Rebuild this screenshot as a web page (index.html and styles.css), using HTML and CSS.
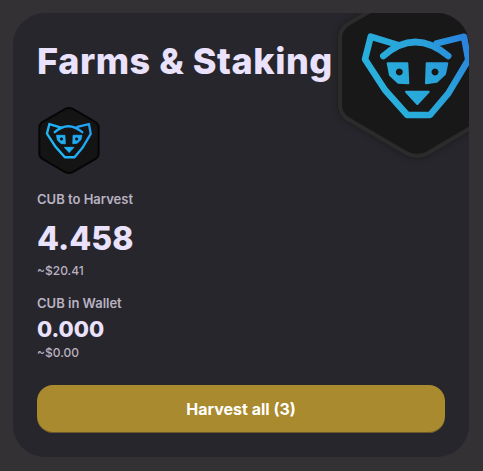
FILE: index.html
```html
<!DOCTYPE html>
<html lang="en">
<head>
<meta charset="utf-8">
<title>Farms &amp; Staking</title>
<link rel="stylesheet" href="styles.css">
</head>
<body>
<svg class="defs" width="0" height="0" aria-hidden="true">
  <defs>
    <linearGradient id="faceBig" gradientUnits="userSpaceOnUse" x1="25" y1="110" x2="130" y2="45">
      <stop offset="0" stop-color="#28b4dc"/>
      <stop offset="0.6" stop-color="#29a2da"/>
      <stop offset="1" stop-color="#2a7ede"/>
    </linearGradient>
    <linearGradient id="faceSmall" gradientUnits="userSpaceOnUse" x1="25" y1="110" x2="130" y2="45">
      <stop offset="0" stop-color="#20bdf5"/>
      <stop offset="1" stop-color="#229cf5"/>
    </linearGradient>
    <g id="face">
      <path class="line" d="M30.7 48.7 25 71.3 45 102 67.3 127H90L108.3 105.3 128.3 72 124 48.7 96.7 55.3M30.7 48.7 58.3 57"/>
      <path class="line" d="M43.3 68Q75 40 108.3 68"/>
      <path class="fill" fill-rule="evenodd" d="M47.7 75.3H67.3L68.3 95.3 58.3 94.7 50 87ZM59.3 79.5a4.5 4.5 0 1 0 .01 0Z"/>
      <path class="fill" fill-rule="evenodd" d="M107.3 75.3H86.7L86 95.3 96.7 93.7 105 86ZM95 79.5a4.5 4.5 0 1 0 .01 0Z"/>
      <path class="fill" d="M66 103.7H88.7L77.3 116Z"/>
    </g>
  </defs>
</svg>
<main class="card">
  <svg class="mascot" viewBox="-6 -6 166 179" aria-hidden="true">
    <path class="hex-big" d="M66 2Q77-4 88 2L146 36Q154 41 154 50V117Q154 126 146 131L88 165Q77 171 66 165L8 131Q0 126 0 117V50Q0 41 8 36Z"/>
    <use href="#face" class="face-big"/>
  </svg>
  <h1 class="title">Farms &amp; Staking</h1>
  <svg class="token" viewBox="-6 -6 166 179" aria-hidden="true">
    <path class="hex-small" d="M66 2Q77-4 88 2L146 36Q154 41 154 50V117Q154 126 146 131L88 165Q77 171 66 165L8 131Q0 126 0 117V50Q0 41 8 36Z"/>
    <use href="#face" class="face-small" transform="translate(-7.7 -12.8) scale(1.1)"/>
  </svg>
  <section class="stat">
    <div class="label">CUB to Harvest</div>
    <div class="value value-lg">4.458</div>
    <div class="usd">~$20.41</div>
  </section>
  <section class="stat stat-wallet">
    <div class="label">CUB in Wallet</div>
    <div class="value value-sm">0.000</div>
    <div class="usd">~$0.00</div>
  </section>
  <button class="harvest" type="button">Harvest all (3)</button>
</main>
</body>
</html>
```
FILE: styles.css
```css
* { box-sizing: border-box; }
html, body { margin: 0; height: 100%; }
body {
  background: #343135;
  padding: 13px 14px 14px 13px;
  font-family: "Inter", "Noto Sans", sans-serif;
  overflow: hidden;
}
.defs { position: absolute; }
.card {
  position: relative;
  height: 444px;
  background: #27262c;
  border-radius: 32px;
  padding: 24px;
  overflow: hidden;
  display: flex;
  flex-direction: column;
  align-items: flex-start;
}
.mascot {
  position: absolute;
  left: 321px;
  top: -31px;
  width: 166px;
  height: 179px;
  filter: drop-shadow(0 0 3px rgba(0,0,0,.35));
}
.hex-big { fill: #181818; stroke: #2b2b2b; stroke-width: 4; }
.hex-small { fill: #141414; stroke: #060606; stroke-width: 5; }
.face-big { --c: url(#faceBig); --w: 6.5; }
.face-small { --c: url(#faceSmall); --w: 5.5; }
.line { fill: none; stroke: var(--c); stroke-width: var(--w); stroke-linejoin: round; stroke-linecap: round; }
.fill { fill: var(--c); stroke: var(--c); stroke-width: 2; stroke-linejoin: round; }
.title {
  margin: 0;
  font-size: 36px;
  line-height: 48px;
  font-weight: 800;
  letter-spacing: .55px;
  color: #eae2fc;
}
.token {
  display: block;
  width: 64px;
  height: 69px;
  margin: 21px 0 0 0;
}
.stat { display: flex; flex-direction: column; }
.label {
  font-size: 13px;
  line-height: 16px;
  font-weight: 600;
  color: #b8b2c2;
  margin-top: 16px;
}
.stat-wallet .label { margin-top: 16px; }
.value { font-weight: 800; color: #eae2fc; }
.value-lg { font-size: 32px; line-height: 40px; margin-top: 12px; }
.value-sm { font-size: 22px; line-height: 28px; margin-top: 4px; }
.usd {
  font-size: 12px;
  line-height: 16px;
  font-weight: 500;
  color: #b8b2c2;
  margin-top: 4px;
}
.stat-wallet .usd { margin-top: 2px; }
.harvest {
  margin-top: auto;
  align-self: stretch;
  height: 48px;
  border: 0;
  border-radius: 16px;
  background: #a98a2e;
  box-shadow: inset 0 -1px 0 rgba(14,14,44,.4);
  color: #fff;
  font-family: inherit;
  font-size: 16px;
  font-weight: 700;
}
```
